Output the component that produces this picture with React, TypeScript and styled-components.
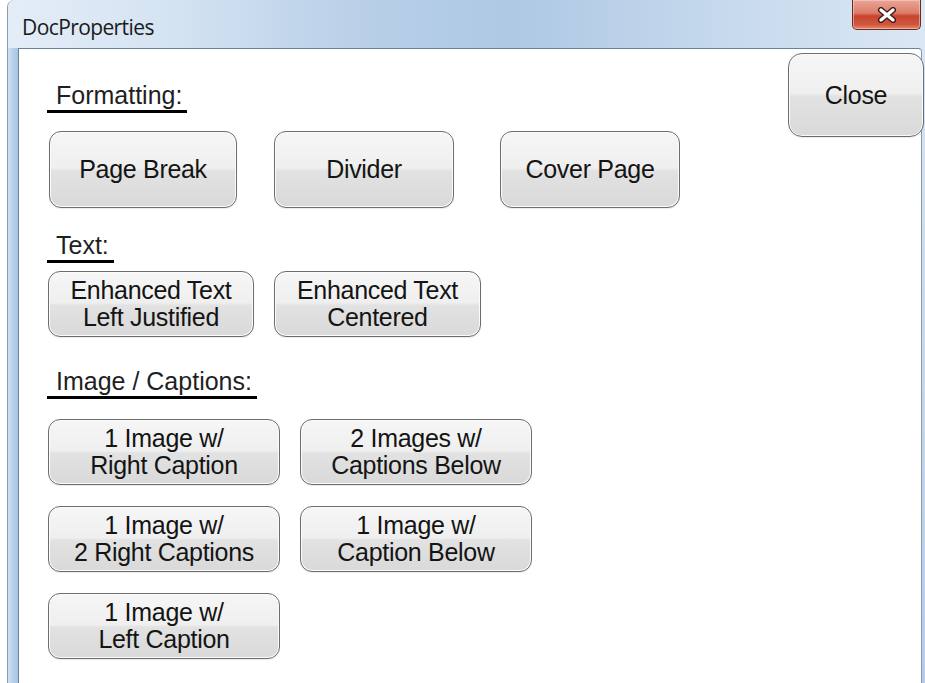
import React from 'react'
import styled, {createGlobalStyle} from 'styled-components'

const GlobalStyle = createGlobalStyle`
  html, body {
    margin: 0;
    padding: 0;
    background: #ffffff;
  }
`

const Desk = styled.div`
  width: 925px;
  height: 683px;
  display: flex;
  background: #ffffff;
  overflow: hidden;
`

// outer window frame, the left edge sits a few px in from the page
const Frame = styled.div`
  flex: 1;
  margin-left: 7px;
  display: flex;
  flex-direction: column;
  border-left: 1px solid #8b9db3;
  border-top-left-radius: 7px;
  background: linear-gradient(180deg, #dce8f5 0%, #c9dcf0 40%, #b3cde8 100%);
`

const TitleBar = styled.div`
  height: 48px;
  display: flex;
  align-items: flex-start;
  background: linear-gradient(90deg, #e4edf7 0%, #d4e3f2 18%, #b9d0e8 38%, #aec8e3 55%, #c3d7ec 75%, #dbe7f4 100%);
  border-top-left-radius: 7px;
`

const Title = styled.div`
  margin-top: 13px;
  margin-left: 14px;
  font-family: "Open Sans", "Noto Sans", sans-serif;
  font-size: 21px;
  letter-spacing: -0.6px;
  color: #1a1a1a;
  line-height: 28px;
`

const CloseBox = styled.div`
  margin-left: auto;
  margin-right: 4px;
  width: 69px;
  height: 30px;
  box-sizing: border-box;
  display: flex;
  align-items: center;
  justify-content: center;
  border: 1px solid #6b2a20;
  border-top: none;
  border-radius: 0 0 5px 5px;
  background: linear-gradient(180deg, #e9a596 0%, #dc7d6a 45%, #c8442f 55%, #d0573f 85%, #e48b6c 100%);
  box-shadow: inset 0 0 0 1px rgba(255, 220, 210, 0.5);
`

const Body = styled.div`
  flex: 1;
  display: flex;
`

const SideStrip = styled.div`
  width: 10px;
  background: linear-gradient(90deg, #cfe0f2 0%, #b4cde8 60%, #a8c4e4 100%);
`

const Client = styled.div`
  flex: 1;
  display: flex;
  justify-content: space-between;
  align-items: flex-start;
  background: #ffffff;
  border-top: 1px solid #6f8196;
  border-left: 1px solid #6f8196;
  border-right: 1px solid #8a9bb0;
  margin-right: 3px;
  border-top-right-radius: 4px;
  padding-left: 28px;
`

const Sections = styled.div`
  display: flex;
  flex-direction: column;
  align-items: flex-start;
  padding-top: 33px;
`

const SectionLabel = styled.div<{ $top: number; $bottom: number }>`
  margin-top: ${({$top}) => $top}px;
  margin-bottom: ${({$bottom}) => $bottom}px;
  padding: 0 5px 2px 9px;
  border-bottom: 3px solid #000000;
  font-family: "Liberation Sans", Arial, sans-serif;
  font-size: 25px;
  line-height: 26px;
  color: #1f1f1f;
`

const FormatRow = styled.div`
  display: flex;
  gap: 37px;
  margin-left: 2px;

  & > :last-child {
    margin-left: 9px;
  }
`

const TextRow = styled.div`
  display: flex;
  gap: 20px;
  margin-left: 1px;
`

const CaptionGrid = styled.div`
  display: grid;
  grid-template-columns: 232px 232px;
  grid-auto-rows: 66px;
  column-gap: 20px;
  row-gap: 21px;
  margin-left: 1px;
`

const Button = styled.button<{ $w?: number; $h: number }>`
  width: ${({$w}) => ($w ? `${$w}px` : '100%')};
  height: ${({$h}) => $h}px;
  box-sizing: border-box;
  margin: 0;
  padding: 0;
  display: flex;
  flex-direction: column;
  align-items: center;
  justify-content: center;
  border: 1px solid #6d6d6d;
  border-radius: 12px;
  background: linear-gradient(180deg, #f6f6f6 0%, #efefef 48%, #e2e2e2 52%, #d9d9d9 100%);
  box-shadow: inset 0 0 0 1px #fbfbfb, 0 1px 1px rgba(0, 0, 0, 0.08);
  font-family: "Liberation Sans", Arial, sans-serif;
  font-size: 25px;
  letter-spacing: -0.3px;
  line-height: 27px;
  color: #141414;
  cursor: pointer;
`

const CloseButton = styled(Button)`
  margin-top: 4px;
  margin-right: -3px;
  border-radius: 14px;
`

function CloseGlyph() {
  return (
    <svg width="20" height="16" viewBox="0 0 20 16">
      <path d="M4 3 L16 13 M16 3 L4 13" stroke="#3b1a16" strokeWidth="6" strokeLinecap="round"/>
      <path d="M4 3 L16 13 M16 3 L4 13" stroke="#ffffff" strokeWidth="3.4" strokeLinecap="round"/>
    </svg>
  )
}

function Label({lines}: { lines: string[] }) {
  return (
    <>
      {lines.map((l) => (
        <span key={l}>{l}</span>
      ))}
    </>
  )
}

const captionButtons = [
  ['1 Image w/', 'Right Caption'],
  ['2 Images w/', 'Captions Below'],
  ['1 Image w/', '2 Right Captions'],
  ['1 Image w/', 'Caption Below'],
  ['1 Image w/', 'Left Caption'],
]

export default function App() {
  return (
    <>
      <GlobalStyle/>
      <Desk>
        <Frame>
          <TitleBar>
            <Title>DocProperties</Title>
            <CloseBox>
              <CloseGlyph/>
            </CloseBox>
          </TitleBar>
          <Body>
            <SideStrip/>
            <Client>
              <Sections>
                <SectionLabel $top={0} $bottom={18}>Formatting:</SectionLabel>
                <FormatRow>
                  <Button $w={188} $h={77}>Page Break</Button>
                  <Button $w={180} $h={77}>Divider</Button>
                  <Button $w={180} $h={77}>Cover Page</Button>
                </FormatRow>

                <SectionLabel $top={24} $bottom={8}>Text:</SectionLabel>
                <TextRow>
                  <Button $w={206} $h={66}>
                    <Label lines={['Enhanced Text', 'Left Justified']}/>
                  </Button>
                  <Button $w={207} $h={66}>
                    <Label lines={['Enhanced Text', 'Centered']}/>
                  </Button>
                </TextRow>

                <SectionLabel $top={31} $bottom={20}>Image / Captions:</SectionLabel>
                <CaptionGrid>
                  {captionButtons.map((lines, i) => (
                    <Button key={i} $h={66}>
                      <Label lines={lines}/>
                    </Button>
                  ))}
                </CaptionGrid>
              </Sections>
              <CloseButton $w={136} $h={84}>Close</CloseButton>
            </Client>
          </Body>
        </Frame>
      </Desk>
    </>
  )
}
